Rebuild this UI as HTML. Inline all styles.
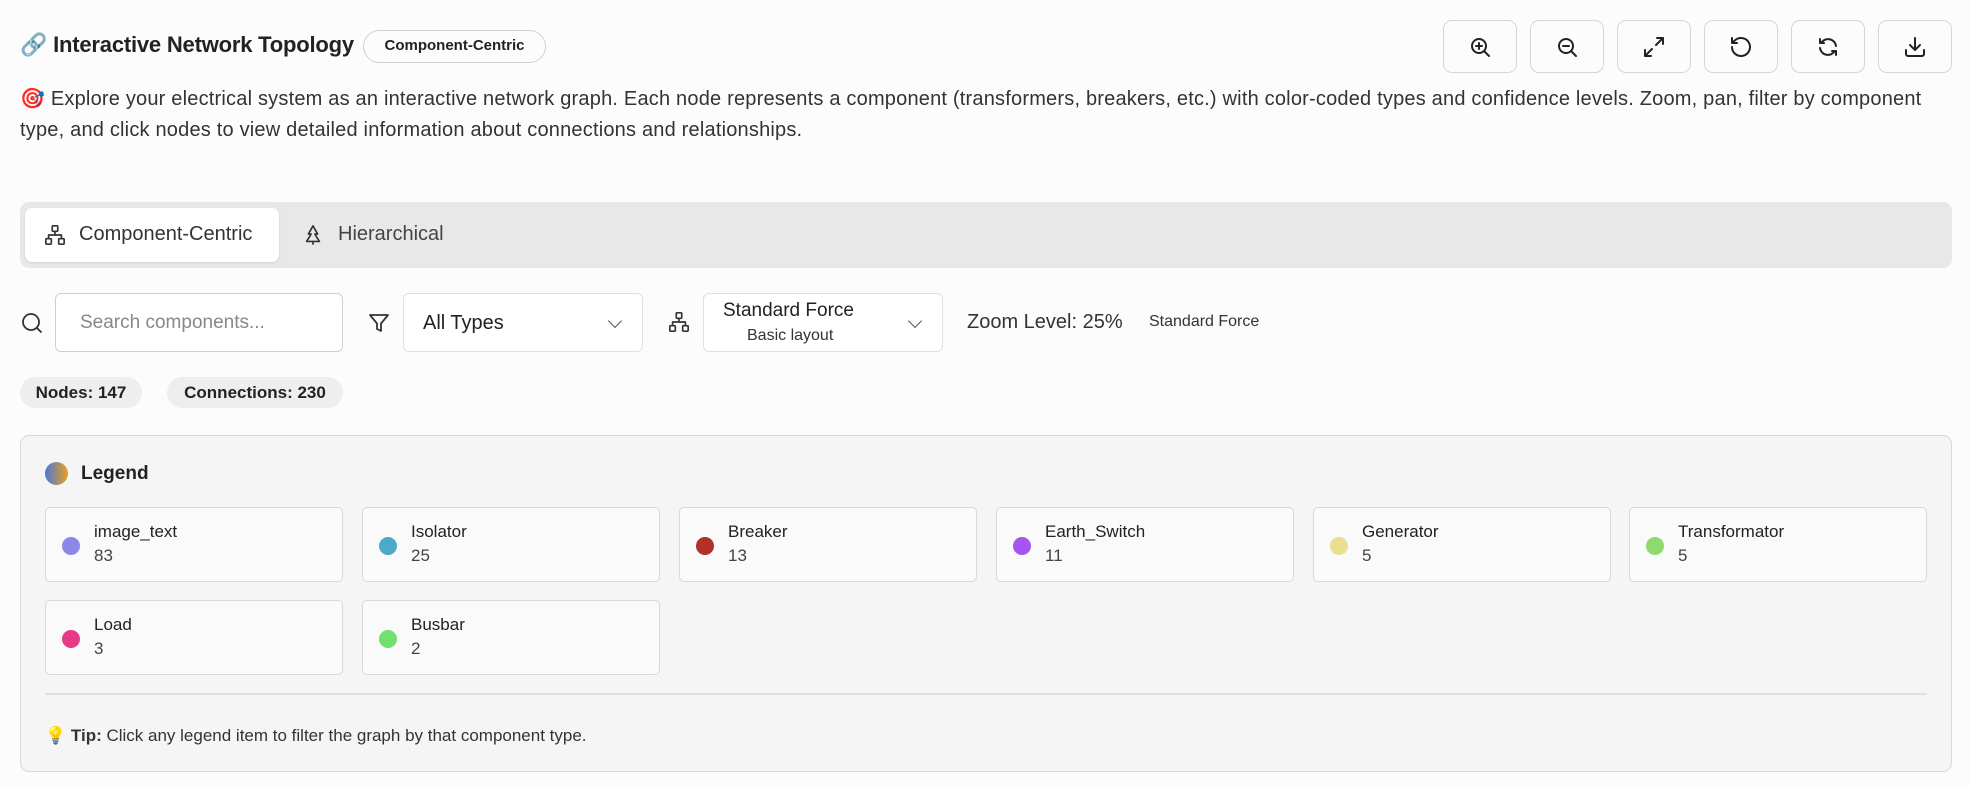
<!DOCTYPE html>
<html><head><meta charset="utf-8"><style>
*{box-sizing:border-box;margin:0;padding:0}
body{width:1970px;height:786px;background:#fcfcfc;font-family:"Liberation Sans",sans-serif;color:#222;position:relative;overflow:hidden}
.a{position:absolute;white-space:nowrap}
.btn{position:absolute;top:20px;width:74px;height:53px;border:1.5px solid #d6d6d6;border-radius:9px;background:#fcfcfc;display:flex;align-items:center;justify-content:center}
.btn svg{width:24px;height:24px;fill:none;stroke:#222;stroke-width:2;stroke-linecap:round;stroke-linejoin:round}
.sel{position:absolute;top:293px;height:59px;border:1.5px solid #e0e0e0;border-radius:6px;background:#fff}
.chev{position:absolute;right:22px;top:22px;width:10px;height:10px;border-right:1.5px solid #555;border-bottom:1.5px solid #555;transform:rotate(45deg)}
.pill{position:absolute;top:377px;height:31px;background:#eee;border-radius:16px;font-weight:bold;font-size:17px;line-height:31px;text-align:center;white-space:nowrap}
.card{position:absolute;width:298px;height:75px;border:1.5px solid #d8d8d8;border-radius:5px;background:#fafafa}
.card i{position:absolute;left:16px;top:29px;width:18px;height:18px;border-radius:50%}
.card b{position:absolute;left:48px;top:14px;font-weight:normal;font-size:17px;color:#222}
.card span{position:absolute;left:48px;top:38px;font-size:17px;color:#444}
.ic{fill:none;stroke:#333;stroke-width:1.8;stroke-linecap:round;stroke-linejoin:round}
</style></head><body>
<div class="a" style="left:20px;top:32px;font-size:22px;font-weight:bold;letter-spacing:-0.2px">🔗 Interactive Network Topology</div>
<div class="a" style="left:363px;top:30px;width:183px;height:33px;border:1.5px solid #d0d0d0;border-radius:17px;font-size:15px;font-weight:bold;line-height:30px;text-align:center">Component-Centric</div>

<div class="btn" style="left:1443px"><svg viewBox="0 0 24 24"><circle cx="11" cy="11" r="7"/><path d="M21 21l-5-5M11 8v6M8 11h6"/></svg></div>
<div class="btn" style="left:1530px"><svg viewBox="0 0 24 24"><circle cx="11" cy="11" r="7"/><path d="M21 21l-5-5M8 11h6"/></svg></div>
<div class="btn" style="left:1617px"><svg viewBox="0 0 24 24"><path d="M15 3h6v6M21 3l-7 7M9 21H3v-6M3 21l7-7"/></svg></div>
<div class="btn" style="left:1704px"><svg viewBox="0 0 24 24"><path d="M3 12a9 9 0 1 0 3-6.7L3 8M3 3v5h5"/></svg></div>
<div class="btn" style="left:1791px"><svg viewBox="0 0 24 24"><path d="M20 11a8 8 0 0 0-14.8-3M4 4v4h4M4 13a8 8 0 0 0 14.8 3M20 20v-4h-4"/></svg></div>
<div class="btn" style="left:1878px"><svg viewBox="0 0 24 24"><path d="M21 15v4a2 2 0 0 1-2 2H5a2 2 0 0 1-2-2v-4M7 10l5 5 5-5M12 15V3"/></svg></div>

<div class="a" style="left:20px;top:84px;width:1935px;white-space:normal;font-size:20px;letter-spacing:0.2px;line-height:31px;color:#333">🎯 Explore your electrical system as an interactive network graph. Each node represents a component (transformers, breakers, etc.) with color-coded types and confidence levels. Zoom, pan, filter by component type, and click nodes to view detailed information about connections and relationships.</div>

<div class="a" style="left:20px;top:202px;width:1932px;height:66px;background:#e8e8e8;border-radius:9px"></div>
<div class="a" style="left:25px;top:208px;width:254px;height:54px;background:#fff;border-radius:7px;box-shadow:0 1px 2px rgba(0,0,0,.1)"></div>
<svg class="a ic" style="left:44px;top:224px" width="22" height="22" viewBox="0 0 24 24"><rect x="9" y="2" width="6" height="6" rx="1"/><rect x="2" y="16" width="6" height="6" rx="1"/><rect x="16" y="16" width="6" height="6" rx="1"/><path d="M12 8v4M5 16v-4h14v4"/></svg>
<div class="a" style="left:79px;top:223px;font-size:20px;color:#333">Component-Centric</div>
<svg class="a ic" style="left:302px;top:224px" width="22" height="22" viewBox="0 0 24 24"><path d="M12 2l-5 9h3l-5 8h14l-5-8h3z M12 19v3"/></svg>
<div class="a" style="left:338px;top:223px;font-size:20px;color:#444">Hierarchical</div>

<svg class="a ic" style="left:20px;top:311px" width="24" height="24" viewBox="0 0 24 24"><circle cx="11" cy="11" r="8"/><path d="M21 21l-4.3-4.3"/></svg>
<div class="sel" style="left:55px;width:288px;border-color:#cfcfcf"><div class="a" style="left:24px;top:18px;font-size:19px;color:#888">Search components...</div></div>
<svg class="a ic" style="left:367px;top:311px" width="24" height="24" viewBox="0 0 24 24"><path d="M3 4h18l-7 8.5V20l-4-2v-5.5z"/></svg>
<div class="sel" style="left:403px;width:240px"><div class="a" style="left:19px;top:18px;font-size:20px">All Types</div><div class="chev"></div></div>
<svg class="a ic" style="left:668px;top:311px" width="22" height="22" viewBox="0 0 24 24"><rect x="9" y="2" width="6" height="6" rx="1"/><rect x="2" y="16" width="6" height="6" rx="1"/><rect x="16" y="16" width="6" height="6" rx="1"/><path d="M12 8v4M5 16v-4h14v4"/></svg>
<div class="sel" style="left:703px;width:240px"><div class="a" style="left:19px;top:6px;font-size:19px">Standard Force</div><div class="a" style="left:43px;top:33px;font-size:16px;color:#333">Basic layout</div><div class="chev"></div></div>
<div class="a" style="left:967px;top:311px;font-size:20px;color:#333">Zoom Level: 25%</div>
<div class="a" style="left:1149px;top:313px;font-size:16px;color:#333">Standard Force</div>

<div class="pill" style="left:20px;width:122px">Nodes: 147</div>
<div class="pill" style="left:167px;width:176px">Connections: 230</div>

<div class="a" style="left:20px;top:435px;width:1932px;height:337px;background:#f5f5f5;border:1.5px solid #d8d8d8;border-radius:9px"></div>
<div class="a" style="left:45px;top:462px;width:23px;height:23px;border-radius:50%;background:linear-gradient(90deg,#4a78d8,#e8a020)"></div>
<div class="a" style="left:81px;top:463px;font-size:19px;font-weight:bold">Legend</div>

<div class="card" style="left:45px;top:507px"><i style="background:#8c88e8"></i><b>image_text</b><span>83</span></div>
<div class="card" style="left:362px;top:507px"><i style="background:#4aaac8"></i><b>Isolator</b><span>25</span></div>
<div class="card" style="left:679px;top:507px"><i style="background:#b0302a"></i><b>Breaker</b><span>13</span></div>
<div class="card" style="left:996px;top:507px"><i style="background:#a855f0"></i><b>Earth_Switch</b><span>11</span></div>
<div class="card" style="left:1313px;top:507px"><i style="background:#e8e090"></i><b>Generator</b><span>5</span></div>
<div class="card" style="left:1629px;top:507px"><i style="background:#90d870"></i><b>Transformator</b><span>5</span></div>
<div class="card" style="left:45px;top:600px"><i style="background:#e83888"></i><b>Load</b><span>3</span></div>
<div class="card" style="left:362px;top:600px"><i style="background:#70e070"></i><b>Busbar</b><span>2</span></div>

<div class="a" style="left:45px;top:693px;width:1882px;height:1.5px;background:#e0e0e0"></div>
<div class="a" style="left:45px;top:726px;font-size:17px;color:#333">💡 <b>Tip:</b> Click any legend item to filter the graph by that component type.</div>
</body></html>
